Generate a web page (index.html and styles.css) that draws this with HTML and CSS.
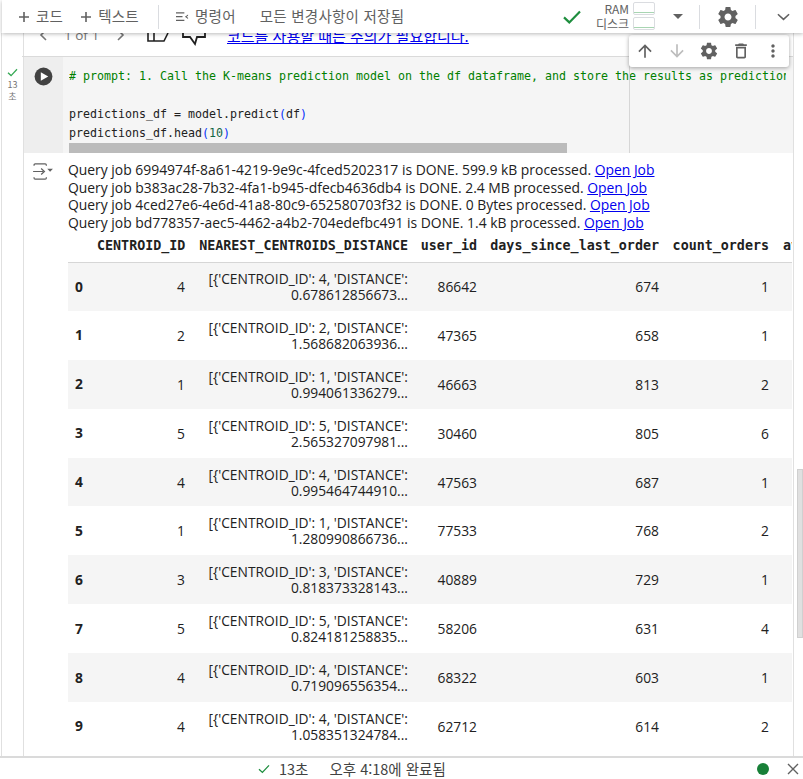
FILE: index.html
```html
<!DOCTYPE html>
<html lang="ko">
<head>
<meta charset="utf-8">
<title>Colab notebook</title>
<link rel="stylesheet" href="styles.css">
</head>
<body>
<svg class="defs" width="0" height="0">
  <symbol id="gear" viewBox="0 0 24 24"><path d="M19.43 12.98c.04-.32.07-.64.07-.98s-.03-.66-.07-.98l2.11-1.65c.19-.15.24-.42.12-.64l-2-3.46c-.12-.22-.39-.3-.61-.22l-2.49 1c-.52-.4-1.08-.73-1.69-.98l-.38-2.65C14.46 2.18 14.25 2 14 2h-4c-.25 0-.46.18-.49.42l-.38 2.65c-.61.25-1.17.59-1.69.98l-2.49-1c-.23-.09-.49 0-.61.22l-2 3.46c-.13.22-.07.49.12.64l2.11 1.65c-.04.32-.07.65-.07.98s.03.66.07.98l-2.11 1.65c-.19.15-.24.42-.12.64l2 3.46c.12.22.39.3.61.22l2.49-1c.52.4 1.08.73 1.69.98l.38 2.65c.03.24.24.42.49.42h4c.25 0 .46-.18.49-.42l.38-2.65c.61-.25 1.17-.59 1.69-.98l2.49 1c.23.09.49 0 .61-.22l2-3.46c.12-.22.07-.49-.12-.64l-2.11-1.65zM12 15.5c-1.93 0-3.5-1.57-3.5-3.5s1.57-3.5 3.5-3.5 3.5 1.57 3.5 3.5-1.57 3.5-3.5 3.5z"/></symbol>
  <symbol id="up" viewBox="0 0 24 24"><path d="M4 12l1.41 1.41L11 7.83V20h2V7.83l5.58 5.59L20 12l-8-8-8 8z"/></symbol>
  <symbol id="down" viewBox="0 0 24 24"><path d="M20 12l-1.41-1.41L13 16.17V4h-2v12.17l-5.58-5.59L4 12l8 8 8-8z"/></symbol>
  <symbol id="trash" viewBox="0 0 24 24"><path d="M6 19c0 1.1.9 2 2 2h8c1.1 0 2-.9 2-2V7H6v12zM8 9h8v10H8V9zm7.5-5l-1-1h-5l-1 1H5v2h14V4z"/></symbol>
  <symbol id="dots" viewBox="0 0 24 24"><path d="M12 8c1.1 0 2-.9 2-2s-.9-2-2-2-2 .9-2 2 .9 2 2 2zm0 2c-1.1 0-2 .9-2 2s.9 2 2 2 2-.9 2-2-.9-2-2-2zm0 6c-1.1 0-2 .9-2 2s.9 2 2 2 2-.9 2-2-.9-2-2-2z"/></symbol>
</svg>

<header class="topbar">
  <div class="tb-left">
    <span class="tb-btn"><svg class="plus" viewBox="0 0 12 12"><path d="M5.2 1h1.6v4.2H11v1.6H6.8V11H5.2V6.8H1V5.2h4.2z"/></svg>코드</span>
    <span class="tb-btn tb-btn-text"><svg class="plus" viewBox="0 0 12 12"><path d="M5.2 1h1.6v4.2H11v1.6H6.8V11H5.2V6.8H1V5.2h4.2z"/></svg>텍스트</span>
    <span class="tb-sep tb-sep-left"></span>
    <span class="tb-cmd"><svg class="cmd-icon" viewBox="0 0 14 10"><path d="M0 0h9v1.3H0zM0 4h7v1.3H0zM0 8h9v1.3H0zM13 2.2 9.6 4.700 13 7.200V5.800l-1.600-1.100L13 3.600z"/></svg>명령어</span>
    <span class="tb-saved">모든 변경사항이 저장됨</span>
  </div>
  <div class="tb-right">
    <svg class="tb-check" viewBox="0 0 18 14"><path d="M1 7.400 6.300 12.400 17 1.600" fill="none" stroke="#1e8e3e" stroke-width="2.200"/></svg>
    <div class="res">
      <div class="res-row"><span>RAM</span><span class="meter"></span></div>
      <div class="res-row"><span>디스크</span><span class="meter"></span></div>
    </div>
    <span class="caret"></span>
    <span class="tb-sep"></span>
    <svg class="tb-gear"><use href="#gear"/></svg>
    <span class="tb-sep"></span>
    <svg class="tb-chevron" viewBox="0 0 14 8"><path d="M1 1l6 5.500L13 1" fill="none" stroke="#616161" stroke-width="1.700"/></svg>
  </div>
</header>

<main class="main">
  <div class="prev-row">
    <svg class="pager-arrow pager-prev" viewBox="0 0 8 12"><path d="M7 1 2 6l5 5" fill="none" stroke="#757575" stroke-width="1.600"/></svg>
    <span class="pager-text">1 of 1</span>
    <svg class="pager-arrow pager-next" viewBox="0 0 8 12"><path d="M1 1l5 5-5 5" fill="none" stroke="#757575" stroke-width="1.600"/></svg>
    <svg class="thumb thumb-up" viewBox="0 0 24 24"><path d="M2 1v18h16l4-8" fill="none" stroke="#212121" stroke-width="1.600"/><path d="M8 1v18" stroke="#212121" stroke-width="1.600"/></svg>
    <svg class="thumb thumb-down" viewBox="0 0 24 24"><path d="M1 6v5h7l5 7 2-7h8V6" fill="none" stroke="#212121" stroke-width="1.800"/></svg>
    <a class="prev-link" href="#">코드를 사용할 때는 주의가 필요합니다.</a>
  </div>

  <section class="cell">
    <div class="gutter">
      <svg class="g-check" viewBox="0 0 12 10"><path d="M1 5.200 4.400 8.400 11 1.400" fill="none" stroke="#34a853" stroke-width="1.400"/></svg>
      <span>13</span>
      <span>초</span>
    </div>
    <div class="run-col">
      <svg class="run" viewBox="0 0 20 20"><circle cx="10" cy="10" r="9.400" fill="#424242"/><path d="M7.200 5.400 15 10l-7.800 4.600z" fill="#fff"/></svg>
    </div>
    <div class="code-wrap">
      <pre class="code"><span class="c-comment"># prompt: 1. Call the K-means prediction model on the df dataframe, and store the results as predictions_df</span>

predictions_df = model.predict<span class="c-paren">(</span>df<span class="c-paren">)</span>
predictions_df.head<span class="c-paren">(</span><span class="c-num">10</span><span class="c-paren">)</span></pre>
      <div class="hscroll"><div class="hthumb"></div></div>
      <span class="ruler"></span>
    </div>
  </section>

  <section class="output">
    <div class="out-gutter">
      <svg class="out-icon" viewBox="0 0 22 18"><path d="M1 3V2.200C1 1.500 1.500 1 2.200 1h10.600c.7 0 1.200.5 1.200 1.200V3M1 15v.8c0 .7.500 1.200 1.200 1.200h10.600c.7 0 1.200-.5 1.200-1.200V15M0 9h11" fill="none" stroke="#616161" stroke-width="1.300"/><path d="M8.500 5.800 12 9l-3.500 3.200" fill="none" stroke="#616161" stroke-width="1.300"/><path d="M15 6h6l-3 3.200z" fill="#616161"/></svg>
    </div>
    <div class="out-body">
      <div class="log">
        <div>Query job 6994974f-8a61-4219-9e9c-4fced5202317 is DONE. 599.9 kB processed. <a href="#">Open Job</a></div>
        <div>Query job b383ac28-7b32-4fa1-b945-dfecb4636db4 is DONE. 2.4 MB processed. <a href="#">Open Job</a></div>
        <div>Query job 4ced27e6-4e6d-41a8-80c9-652580703f32 is DONE. 0 Bytes processed. <a href="#">Open Job</a></div>
        <div>Query job bd778357-aec5-4462-a4b2-704edefbc491 is DONE. 1.4 kB processed. <a href="#">Open Job</a></div>
      </div>
      <div class="table-clip">
        <table class="df">
          <colgroup><col class="c0"><col class="c1"><col class="c2"><col class="c3"><col class="c4"><col class="c5"><col class="c6"></colgroup>
          <thead>
            <tr><th></th><th>CENTROID_ID</th><th>NEAREST_CENTROIDS_DISTANCE</th><th>user_id</th><th>days_since_last_order</th><th>count_orders</th><th class="th-last">avg_spend</th></tr>
          </thead>
          <tbody>
            <tr><th>0</th><td>4</td><td>[{'CENTROID_ID': 4, 'DISTANCE': 0.678612856673...</td><td>86642</td><td>674</td><td>1</td><td></td></tr>
            <tr><th>1</th><td>2</td><td>[{'CENTROID_ID': 2, 'DISTANCE': 1.568682063936...</td><td>47365</td><td>658</td><td>1</td><td></td></tr>
            <tr><th>2</th><td>1</td><td>[{'CENTROID_ID': 1, 'DISTANCE': 0.994061336279...</td><td>46663</td><td>813</td><td>2</td><td></td></tr>
            <tr><th>3</th><td>5</td><td>[{'CENTROID_ID': 5, 'DISTANCE': 2.565327097981...</td><td>30460</td><td>805</td><td>6</td><td></td></tr>
            <tr><th>4</th><td>4</td><td>[{'CENTROID_ID': 4, 'DISTANCE': 0.995464744910...</td><td>47563</td><td>687</td><td>1</td><td></td></tr>
            <tr><th>5</th><td>1</td><td>[{'CENTROID_ID': 1, 'DISTANCE': 1.280990866736...</td><td>77533</td><td>768</td><td>2</td><td></td></tr>
            <tr><th>6</th><td>3</td><td>[{'CENTROID_ID': 3, 'DISTANCE': 0.818373328143...</td><td>40889</td><td>729</td><td>1</td><td></td></tr>
            <tr><th>7</th><td>5</td><td>[{'CENTROID_ID': 5, 'DISTANCE': 0.824181258835...</td><td>58206</td><td>631</td><td>4</td><td></td></tr>
            <tr><th>8</th><td>4</td><td>[{'CENTROID_ID': 4, 'DISTANCE': 0.719096556354...</td><td>68322</td><td>603</td><td>1</td><td></td></tr>
            <tr><th>9</th><td>4</td><td>[{'CENTROID_ID': 4, 'DISTANCE': 1.058351324784...</td><td>62712</td><td>614</td><td>2</td><td></td></tr>
          </tbody>
        </table>
      </div>
    </div>
  </section>

  <div class="cell-toolbar">
    <svg class="ct-icon"><use href="#up"/></svg>
    <svg class="ct-icon ct-off"><use href="#down"/></svg>
    <svg class="ct-icon"><use href="#gear"/></svg>
    <svg class="ct-icon"><use href="#trash"/></svg>
    <svg class="ct-icon"><use href="#dots"/></svg>
  </div>
  <div class="page-scroll"></div>
</main>

<footer class="status">
  <svg class="st-check" viewBox="0 0 12 10"><path d="M1 5.200 4.400 8.400 11 1.400" fill="none" stroke="#1e8e3e" stroke-width="1.300"/></svg>
  <span class="st-time">13초</span>
  <span class="st-done">오후 4:18에 완료됨</span>
  <span class="st-dot"></span>
  <svg class="st-close" viewBox="0 0 12 12"><path d="M1 1l10 10M11 1 1 11" stroke="#616161" stroke-width="1.400"/></svg>
</footer>
</body>
</html>
```

FILE: styles.css
```css
* { box-sizing: border-box; }
html, body { margin: 0; height: 100%; }
body {
  display: flex;
  flex-direction: column;
  height: 779px;
  overflow: hidden;
  background: #fff;
  color: #212121;
  font-family: "Open Sans", "Noto Sans CJK KR", sans-serif;
}
.defs { position: absolute; }

/* top toolbar */
.topbar {
  position: relative;
  z-index: 3;
  flex: none;
  height: 33px;
  margin-left: 2px;
  display: flex;
  justify-content: space-between;
  align-items: center;
  background: #fff;
  color: #616161;
  font: 14.5px "Noto Sans CJK KR", sans-serif;
  letter-spacing: .25px;
  box-shadow: 0 1px 4px rgba(0, 0, 0, .28);
}
.tb-left, .tb-right { display: flex; align-items: center; }
.tb-left { padding-left: 16px; height: 100%; }
.tb-btn { display: flex; align-items: center; gap: 6px; margin-top: -2px; }
.tb-btn-text { margin-left: 17px; }
.plus { width: 12px; height: 12px; fill: #616161; margin-top: 2px; }
.tb-sep { width: 1px; height: 24px; background: #dadce0; }
.tb-sep-left { margin: 0 17px 0 19px; }
.tb-cmd { display: flex; align-items: center; gap: 6px; margin-top: -2px; }
.cmd-icon { width: 13px; height: 10px; fill: #616161; margin-top: 2px; }
.tb-saved { margin-left: 24px; margin-top: -2px; }
.tb-right { height: 100%; }
.tb-check { width: 18px; height: 14px; margin-right: 15px; }
.res { display: flex; flex-direction: column; gap: 0; margin-top: -1px; font-size: 12px; line-height: 15px; letter-spacing: 0; }
.res-row { display: flex; justify-content: flex-end; align-items: center; gap: 4px; }
.meter {
  width: 22px;
  height: 13px;
  border: 1px solid #dadce0;
  border-radius: 2px;
  background: linear-gradient(#fff 9px, #a8d5b2 9px, #a8d5b2 10px, #fff 10px);
}
.caret {
  width: 0;
  height: 0;
  margin: 0 16px 0 18px;
  border: 5px solid transparent;
  border-top: 5px solid #616161;
  border-bottom: 0;
}
.tb-gear { width: 24px; height: 24px; margin: 0 15px 0 16px; fill: #616161; }
.tb-chevron { width: 13px; height: 8px; margin: 0 13px 0 21px; }

/* notebook */
.main {
  position: relative;
  flex: 1;
  min-height: 0;
  overflow: hidden;
  margin-left: 1px;
  padding-left: 20px;
  width: 793px;
  border-left: 1px solid #e0e0e0;
  border-right: 1px solid #e0e0e0;
}
.main::before {
  content: "";
  position: absolute;
  left: 21px;
  top: 0;
  bottom: 0;
  width: 1px;
  background: #e0e0e0;
}
.prev-row {
  position: relative;
  height: 24px;
  border-bottom: 1px solid #dadada;
  overflow: hidden;
}
.pager-arrow { position: absolute; top: -4px; width: 8px; height: 12px; }
.pager-prev { left: 17px; }
.pager-next { left: 95px; }
.pager-text { position: absolute; left: 42px; top: -7px; font-size: 13.5px; line-height: 18px; color: #757575; }
.thumb { position: absolute; top: -11px; width: 24px; height: 24px; }
.thumb-up { left: 124px; }
.thumb-down { left: 160px; top: -7px; }
.prev-link {
  position: absolute;
  left: 205px;
  top: -6px;
  font: 15px/18px "Noto Sans CJK KR", sans-serif;
  color: #0000ee;
}

.cell { display: flex; height: 96px; }
.gutter {
  position: absolute;
  left: 0;
  width: 21px;
  padding-top: 11px;
  display: flex;
  flex-direction: column;
  align-items: center;
  font: 9px/12px "Noto Sans CJK KR", sans-serif;
  color: #757575;
}
.g-check { width: 11px; height: 9px; margin-bottom: 2px; }
.run-col {
  flex: none;
  width: 40px;
  margin-left: 1px;
  background: #eee;
  padding: 10px 0 0 11px;
}
.run { display: block; width: 19px; height: 19px; }
.code-wrap {
  position: relative;
  flex: 1;
  min-width: 0;
  background: #f5f5f5;
  padding: 0 0 0 6px;
}
.code {
  margin: 0;
  height: 86px;
  padding-top: 10px;
  margin-right: 7px;
  overflow: hidden;
  font: 11.63px/19px "DejaVu Sans Mono", monospace;
  color: #212121;
}
.c-comment { color: #008000; }
.c-paren { color: #0431fa; }
.c-num { color: #116644; }
.hscroll { height: 10px; }
.hthumb { width: 498px; height: 10px; background: #bbb; }
.ruler { position: absolute; left: 566px; top: 0; bottom: 0; width: 1px; background: #d6d6d6; }

.output { display: flex; }
.out-gutter { flex: none; width: 46px; padding: 10px 0 0 11px; }
.out-icon { display: block; width: 21px; height: 17px; }
.out-body { flex: 1; min-width: 0; }
.log {
  padding-top: 8px;
  font-size: 13.9px;
  line-height: 17.5px;
  white-space: nowrap;
  color: #212121;
}
.log a { color: #0000ee; }
.table-clip { overflow: hidden; width: 724px; }
.df { border-collapse: collapse; table-layout: fixed; width: 806px; font-size: 13.8px; line-height: 16px; }
.c0 { width: 24px; }
.c1 { width: 98px; }
.c2 { width: 223px; }
.c3 { width: 69px; }
.c4 { width: 182px; }
.c5 { width: 110px; }
.c6 { width: 100px; }
.df th, .df td { padding: 0 5px; text-align: right; font-weight: 400; }
.df thead th {
  height: 31px;
  border-bottom: 1px solid #d6d6d6;
  font: bold 13.35px/16px "DejaVu Sans Mono", monospace;
  color: #212121;
  white-space: nowrap;
}
.df thead .th-last { text-align: left; padding-left: 9px; }
.df tbody tr { height: 48.9px; }
.df tbody tr:nth-child(odd) { background: #f5f5f5; }
.df tbody th { text-align: left; padding-left: 7px; font-weight: 700; }
.df tbody td { padding-top: 1px; }

.cell-toolbar {
  position: absolute;
  left: 627px;
  top: 2px;
  width: 160px;
  height: 32px;
  display: flex;
  align-items: center;
  background: #fff;
  border-radius: 3px;
  box-shadow: 0 1px 4px rgba(0, 0, 0, .35);
}
.ct-icon { width: 24px; height: 24px; padding: 2px; fill: #616161; flex: none; margin: 0 4px; }
.ct-off { fill: #bdbdbd; }

.page-scroll {
  position: fixed;
  left: 797px;
  top: 469px;
  width: 6px;
  height: 169px;
  background: #e0e0e0;
  border: 1px solid #d0d0d0;
}

/* status bar */
.status {
  flex: none;
  position: relative;
  height: 23px;
  border-top: 2px solid #dadada;
  background: #fff;
  display: flex;
  align-items: center;
  padding-left: 258px;
  font: 14.5px "Noto Sans CJK KR", sans-serif;
  color: #424242;
}
.st-check { width: 12px; height: 10px; }
.st-time { margin-left: 9px; }
.st-done { margin-left: 21px; }
.st-dot { margin-left: auto; width: 12px; height: 12px; border-radius: 50%; background: #188038; }
.st-close { width: 12px; height: 12px; margin: 0 4px 0 18px; }
```
